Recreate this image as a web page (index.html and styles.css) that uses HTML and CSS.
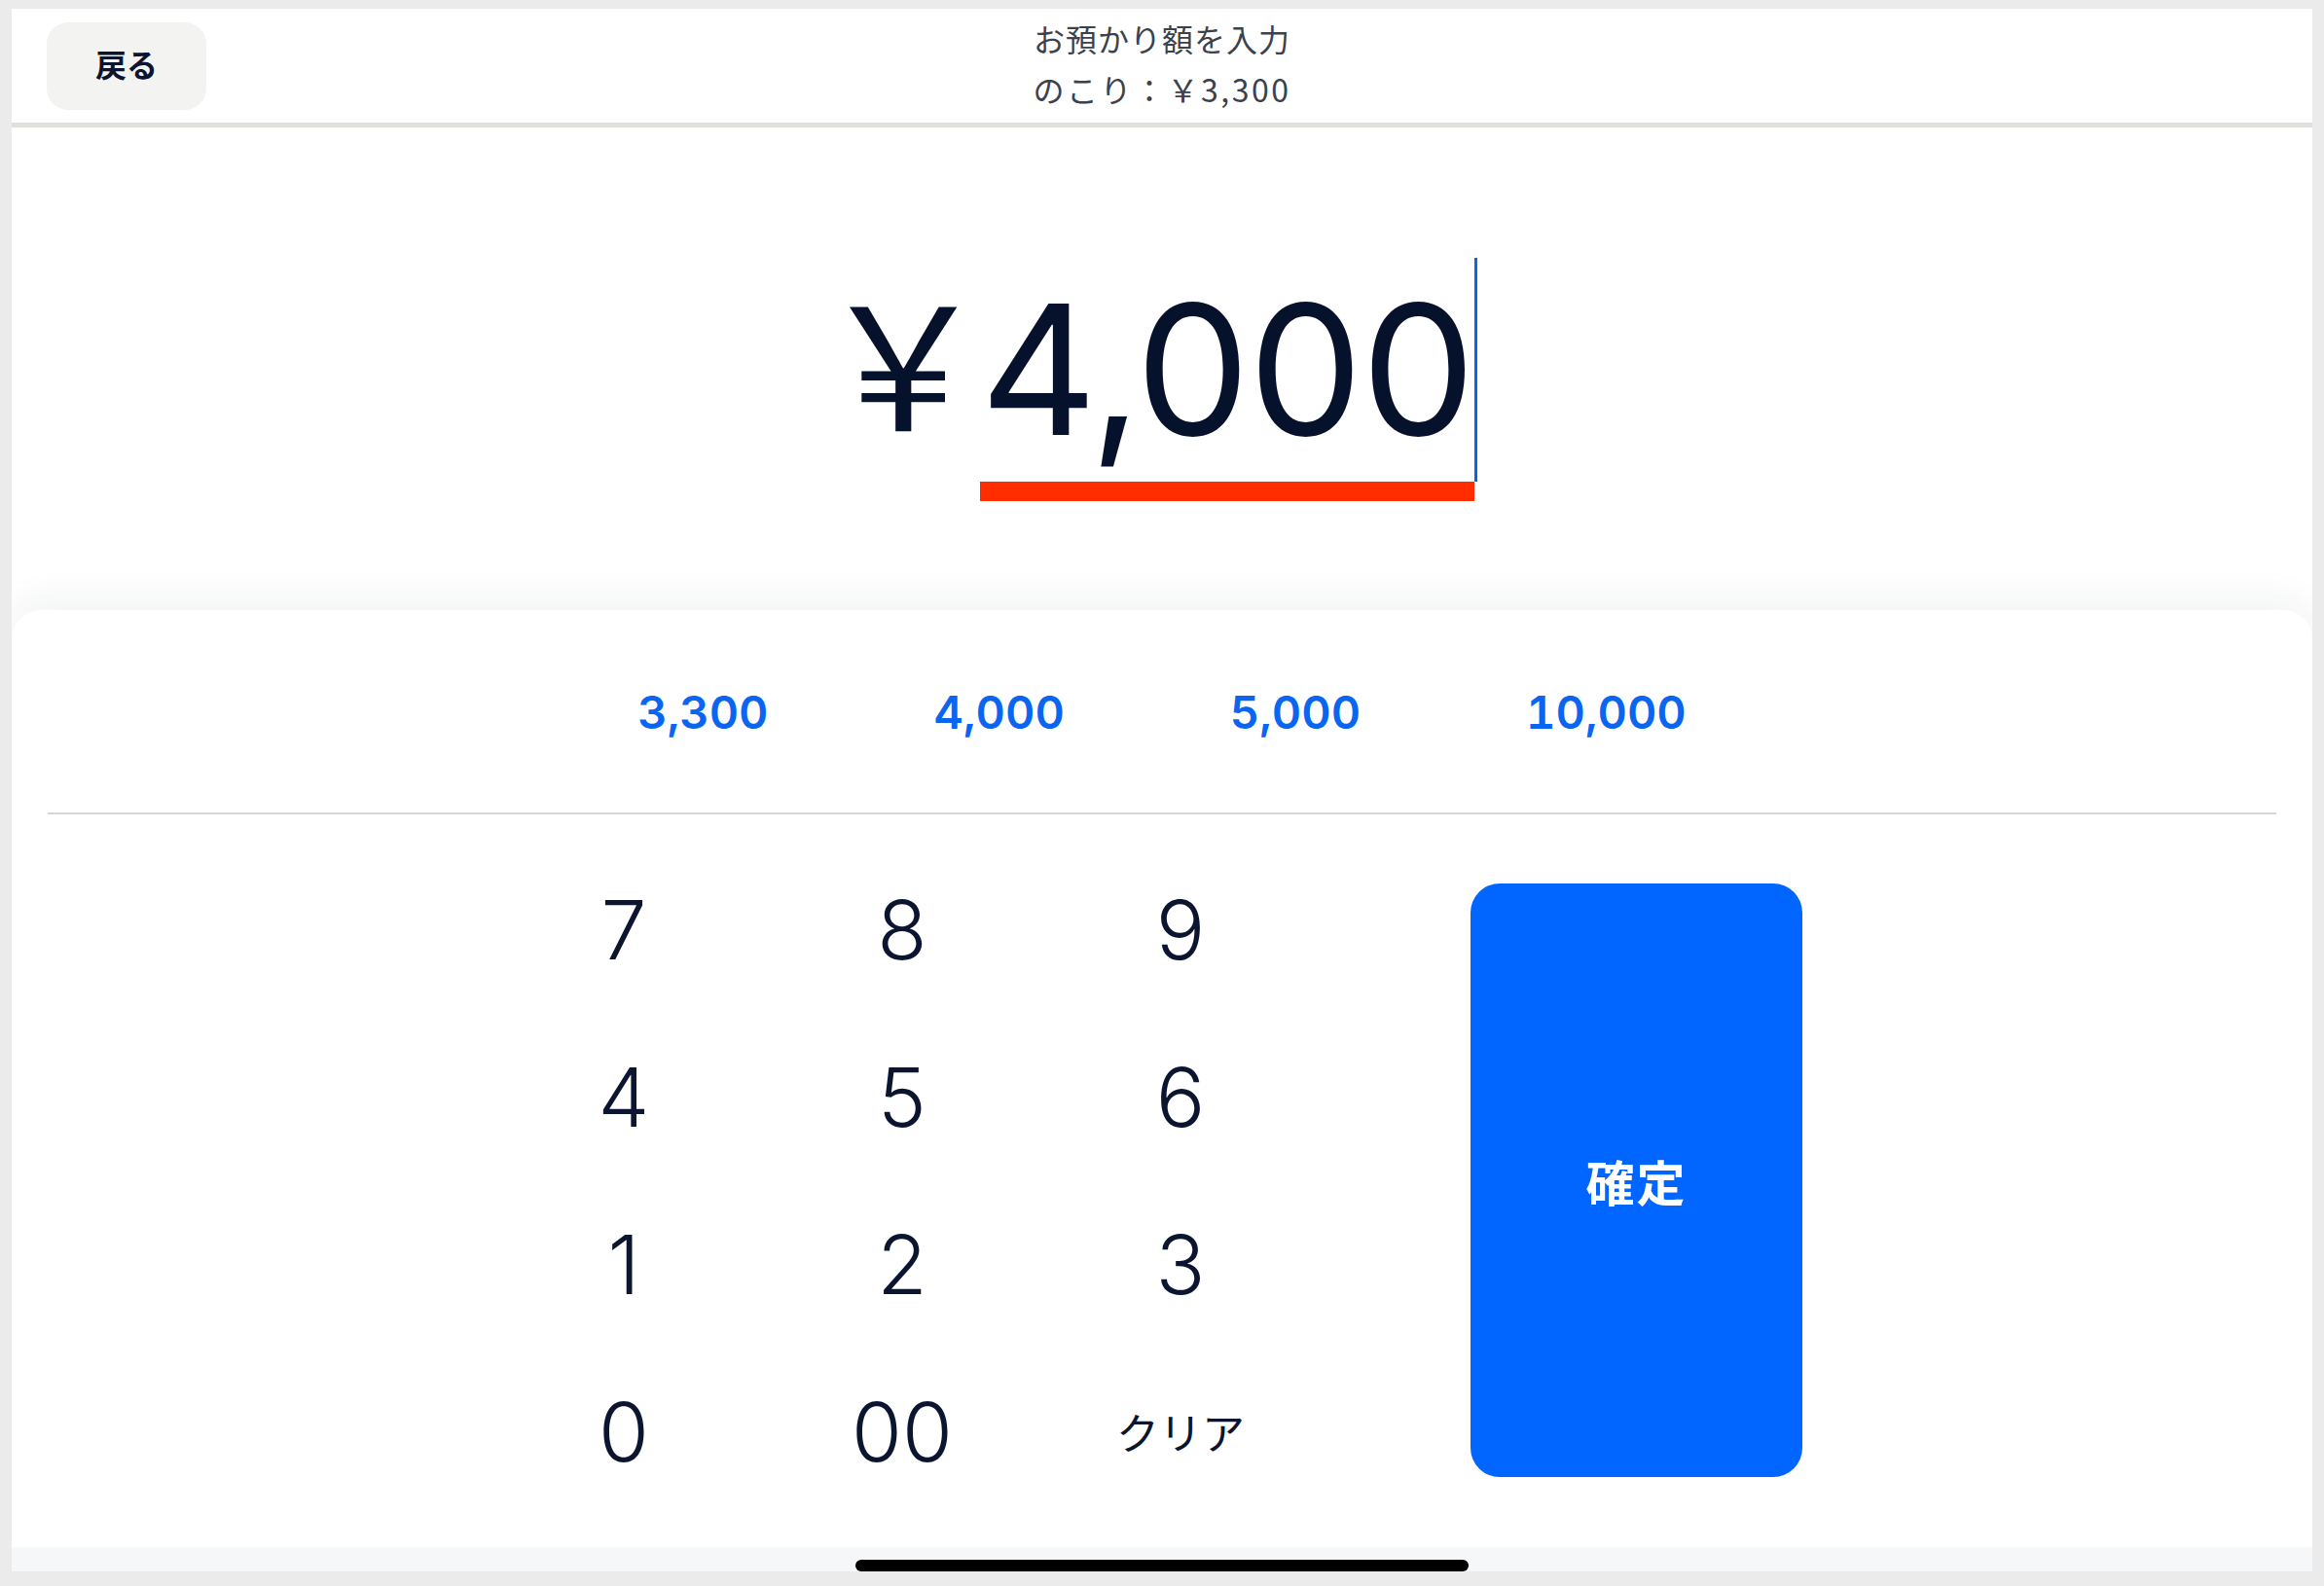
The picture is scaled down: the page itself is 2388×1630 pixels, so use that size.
FILE: index.html
```html
<!DOCTYPE html>
<html lang="ja">
  <head>
    <meta charset="UTF-8" />
    <title>お預かり額を入力</title>
    <link rel="stylesheet" href="styles.css">
  </head>

  <body>
    <div class="screen">
      <header>
        <button class="back">戻る</button>
        <div class="title">
          <p>お預かり額を入力</p>
          <p class="rest">のこり：￥3,300</p>
        </div>
      </header>

      <section class="amount">
        <span class="yen">￥</span>
        <span class="value">4,000</span>
        <span class="caret"></span>
      </section>

      <main class="panel">
        <nav class="quick">
          <button>3,300</button>
          <button>4,000</button>
          <button>5,000</button>
          <button>10,000</button>
        </nav>
        <hr />
        <div class="keys">
          <div class="pad">
            <button>7</button>
            <button>8</button>
            <button>9</button>
            <button>4</button>
            <button>5</button>
            <button>6</button>
            <button>1</button>
            <button>2</button>
            <button>3</button>
            <button>0</button>
            <button>00</button>
            <button class="clear">クリア</button>
          </div>
          <button class="ok">確定</button>
        </div>
      </main>

      <footer>
        <span class="home"></span>
      </footer>
    </div>
  </body>
</html>
```

FILE: styles.css
```css
body {
  margin: 0;
  background-color: #ebebeb;
  padding: 9px 12px 15px 12px;
  height: 1630px;
  box-sizing: border-box;
  font-family: Inter, "Noto Sans CJK JP", sans-serif;
  color: #08132e;
}

button {
  font-family: inherit;
  border: none;
  background: none;
  color: inherit;
  padding: 0;
}

.screen {
  background-color: white;
  height: 1606px;
  display: flex;
  flex-direction: column;
  position: relative;
  overflow: hidden;
}

header {
  height: 117px;
  border-bottom: 5px solid #dfe0dc;
  display: flex;
  align-items: center;
  position: relative;
  padding-left: 36px;
}

.back {
  width: 164px;
  height: 90px;
  padding-bottom: 6px;
  background-color: #f3f3f2;
  border-radius: 22px;
  font-family: "Noto Sans CJK JP", sans-serif;
  font-weight: 700;
  font-size: 32px;
  color: #0b1530;
}

.title {
  flex: 1;
  text-align: center;
  margin-right: 200px;
  padding-bottom: 6px;
  font-family: "Noto Sans CJK JP", sans-serif;
  font-size: 32px;
  line-height: 52px;
  color: #3b414d;
  letter-spacing: 1px;
}

.title p {
  margin: 0;
}

.title .rest {
  letter-spacing: 2.5px;
}

.amount {
  height: 496px;
  box-sizing: border-box;
  padding-top: 134px;
  padding-right: 30px;
  display: flex;
  justify-content: center;
  align-items: flex-start;
}

.yen {
  font-family: "Noto Sans CJK JP", sans-serif;
  font-size: 176px;
  line-height: 1;
  margin-top: 14px;
  margin-right: -9px;
  color: #06112b;
}

.value {
  font-size: 186px;
  line-height: 1;
  letter-spacing: -1.5px;
  margin-top: 22px;
  padding-bottom: 22px;
  border-bottom: 20px solid #ff2d00;
  color: #06112b;
}

.caret {
  width: 3px;
  height: 230px;
  background-color: #0a64e6;
}

.panel {
  flex: 1;
  border-radius: 30px 30px 0 0;
  box-shadow: 0 -14px 34px rgba(20, 30, 60, 0.05);
  display: flex;
  flex-direction: column;
}

.quick {
  height: 208px;
  display: flex;
  justify-content: center;
  align-items: center;
  gap: 170px;
}

.quick button {
  font-size: 47px;
  font-weight: 600;
  font-variant-numeric: tabular-nums;
  color: #0a66f0;
}

hr {
  margin: 0 37px;
  border: none;
  height: 2px;
  background-color: #d6d6d6;
}

.keys {
  display: flex;
  justify-content: center;
  padding-top: 32px;
  padding-right: 38px;
}

.pad {
  display: grid;
  grid-template-columns: repeat(3, 286px);
  grid-template-rows: repeat(4, 172px);
}

.pad button {
  font-size: 84px;
  font-weight: 300;
  color: #0b1530;
}

.pad .clear {
  font-family: "Noto Sans CJK JP", sans-serif;
  font-size: 44px;
  font-weight: 400;
}

.ok {
  width: 341px;
  height: 610px;
  margin: 39px 0 0 155px;
  background-color: #0066ff;
  border-radius: 30px;
  color: white;
  font-family: "Noto Sans CJK JP", sans-serif;
  font-weight: 700;
  font-size: 50px;
  letter-spacing: 2px;
}

footer {
  height: 25px;
  background-color: #f6f7f9;
  position: relative;
}

.home {
  position: absolute;
  bottom: 0;
  left: 50%;
  width: 630px;
  margin-left: -315px;
  height: 12px;
  border-radius: 6px;
  background-color: black;
}
```
